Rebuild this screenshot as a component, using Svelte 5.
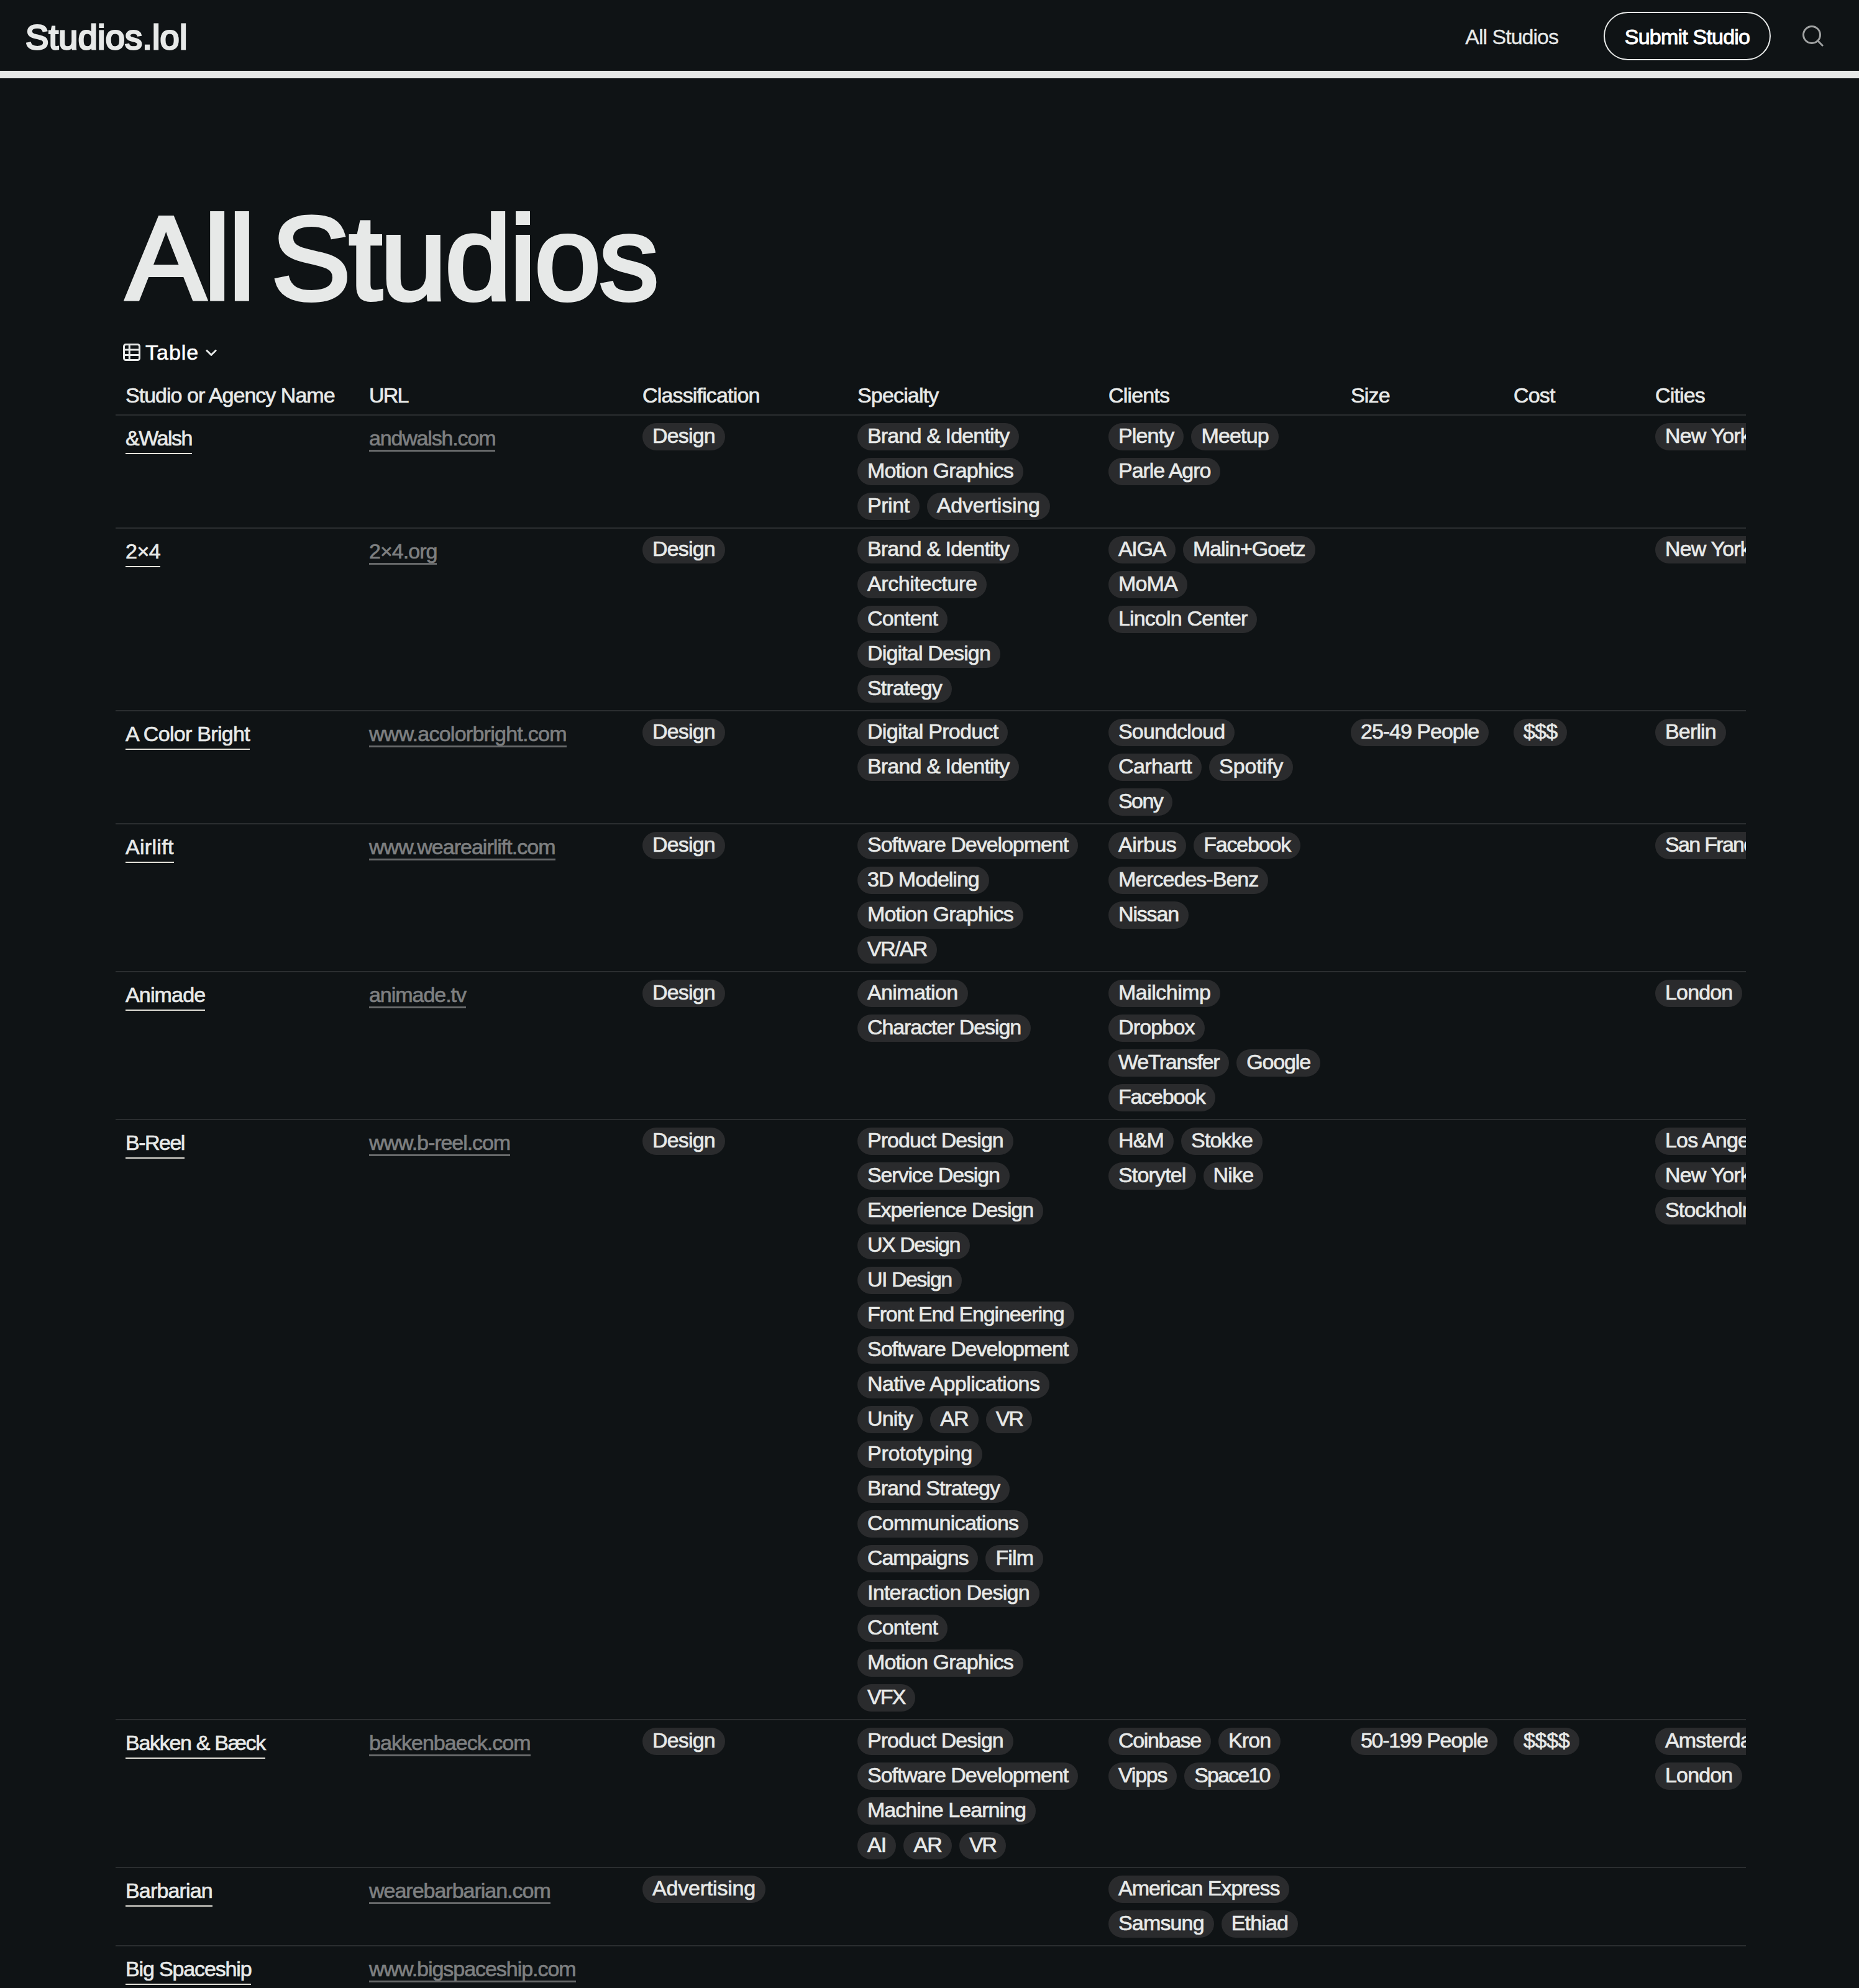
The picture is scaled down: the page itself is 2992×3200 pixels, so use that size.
<script lang="ts">
  type Row = {
    name: string;
    url: string;
    kind: string[][];
    specialty: string[][];
    clients: string[][];
    size: string[][];
    cost: string[][];
    cities: string[][];
  };

  // Lines are split by " / ", tags on one line by "|".
  const tags = (s: string): string[][] =>
    s ? s.split(' / ').map((line) => line.split('|')) : [];

  const row = (
    name: string, url: string, kind: string, specialty: string,
    clients: string, size: string, cost: string, cities: string
  ): Row => ({
    name, url, kind: tags(kind), specialty: tags(specialty), clients: tags(clients),
    size: tags(size), cost: tags(cost), cities: tags(cities)
  });

  const optical: Record<string, number> = {
    'Studio or Agency Name': -3, URL: -3,
    '&Walsh': -4, '2×4': 1, 'A Color Bright': 2, Airlift: 8, 'B-Reel': -4,
    'Bakken & Bæck': -6, 'Big Spaceship': -4,
    'andwalsh.com': -4, '2×4.org': -1, 'www.acolorbright.com': 2, 'www.weareairlift.com': -3,
    'animade.tv': -2, 'www.b-reel.com': -3, 'bakkenbaeck.com': -2,
    'wearebarbarian.com': -3, 'www.bigspaceship.com': -4,
    Advertising: 7, Architecture: 5, 'Digital Product': 2, 'Software Development': -4,
    '3D Modeling': -2, 'VR/AR': -4, Animation: 2, 'Character Design': -4,
    'Service Design': -4, 'Experience Design': -4, 'UX Design': -6, 'UI Design': -6,
    'Front End Engineering': -6, 'Native Applications': 6, VR: -3, Prototyping: 6,
    'Brand Strategy': -2, Campaigns: -2, 'Interaction Design': 2, VFX: -3,
    'Machine Learning': -2, Communications: 2, Print: 2, 'Product Design': -2,
    AIGA: -2, 'Malin+Goetz': -2, Spotify: 5, Sony: -3, Facebook: -3, 'Mercedes-Benz': -2,
    Nissan: -2, Mailchimp: 3, WeTransfer: -5, Google: -2, Coinbase: -4, Space10: -7,
    Vipps: -2, 'American Express': -3, 'Parle Agro': -2, Carhartt: 2, Airbus: 2,
    '25-49 People': -2, '50-199 People': -6, 'San Francisco': -11, '$$$$': 2
  };

  const tracking = (label: string): string =>
    `letter-spacing: ${(-0.84 + (optical[label] ?? 0) / label.length).toFixed(2)}px`;

  const columns = ['Studio or Agency Name', 'URL', 'Classification', 'Specialty', 'Clients', 'Size', 'Cost', 'Cities'];

  const rows: Row[] = [
    row('&Walsh', 'andwalsh.com', 'Design',
      'Brand & Identity / Motion Graphics / Print|Advertising',
      'Plenty|Meetup / Parle Agro', '', '', 'New York'),
    row('2×4', '2×4.org', 'Design',
      'Brand & Identity / Architecture / Content / Digital Design / Strategy',
      'AIGA|Malin+Goetz / MoMA / Lincoln Center', '', '', 'New York'),
    row('A Color Bright', 'www.acolorbright.com', 'Design',
      'Digital Product / Brand & Identity',
      'Soundcloud / Carhartt|Spotify / Sony', '25-49 People', '$$$', 'Berlin'),
    row('Airlift', 'www.weareairlift.com', 'Design',
      'Software Development / 3D Modeling / Motion Graphics / VR/AR',
      'Airbus|Facebook / Mercedes-Benz / Nissan', '', '', 'San Francisco'),
    row('Animade', 'animade.tv', 'Design',
      'Animation / Character Design',
      'Mailchimp / Dropbox / WeTransfer|Google / Facebook', '', '', 'London'),
    row('B-Reel', 'www.b-reel.com', 'Design',
      'Product Design / Service Design / Experience Design / UX Design / UI Design / Front End Engineering / Software Development / Native Applications / Unity|AR|VR / Prototyping / Brand Strategy / Communications / Campaigns|Film / Interaction Design / Content / Motion Graphics / VFX',
      'H&M|Stokke / Storytel|Nike', '', '', 'Los Angeles / New York / Stockholm'),
    row('Bakken & Bæck', 'bakkenbaeck.com', 'Design',
      'Product Design / Software Development / Machine Learning / AI|AR|VR',
      'Coinbase|Kron / Vipps|Space10', '50-199 People', '$$$$', 'Amsterdam / London'),
    row('Barbarian', 'wearebarbarian.com', 'Advertising', '',
      'American Express / Samsung|Ethiad', '', '', ''),
    row('Big Spaceship', 'www.bigspaceship.com', '', '', '', '', '', '')
  ];
</script>

{#snippet tagCell(lines: string[][])}
  <div class="cell tags">
    {#each lines as line}
      <div class="line">
        {#each line as tag}<span class="tag" style={tracking(tag)}>{tag}</span>{/each}
      </div>
    {/each}
  </div>
{/snippet}

<div class="page">
  <header>
    <a class="brand" href="#top">Studios.lol</a>
    <nav>
      <a class="link" href="#all">All Studios</a>
      <button class="submit">Submit Studio</button>
      <svg class="search" viewBox="0 0 34 34" aria-label="Search">
        <circle cx="15" cy="15" r="13.5" />
        <path d="M24.500 24.500 33 33" />
      </svg>
    </nav>
  </header>

  <main>
    <h1>All Studios</h1>

    <div class="view">
      <svg class="grid-icon" viewBox="0 0 28 28">
        <rect x="1.5" y="1.5" width="25" height="25" rx="3" />
        <path d="M1.500 10h25M1.500 18.500h25M10.300 1.500v25" />
      </svg>
      <span>Table</span>
      <svg class="chevron" viewBox="0 0 18 11"><path d="M1 1.500 9 9.300l8-7.800" /></svg>
    </div>

    <div class="table">
      <div class="row head">
        {#each columns as c}<div class="cell" style={tracking(c)}>{c}</div>{/each}
      </div>
      {#each rows as r}
        <div class="row">
          <div class="cell"><a class="name" href="#studio" style={tracking(r.name)}>{r.name}</a></div>
          <div class="cell"><a class="url" href="#url" style={tracking(r.url)}>{r.url}</a></div>
          {@render tagCell(r.kind)}
          {@render tagCell(r.specialty)}
          {@render tagCell(r.clients)}
          {@render tagCell(r.size)}
          {@render tagCell(r.cost)}
          {@render tagCell(r.cities)}
        </div>
      {/each}
    </div>
  </main>
</div>

<style>
  :global(body) {
    background: #0f1315;
  }
  .page {
    height: 3200px;
    overflow: hidden;
    background: #0f1315;
    color: #e7e9e8;
    font-family: 'Liberation Sans', Arial, sans-serif;
    font-size: 34px;
    line-height: 44px;
    letter-spacing: -0.84px;
  }
  a {
    color: inherit;
    text-decoration: none;
  }
  header {
    box-sizing: border-box;
    height: 126px;
    padding: 2px 57px 0 41px;
    border-bottom: 12px solid #e7e9e8;
    display: flex;
    align-items: center;
    justify-content: space-between;
  }
  .brand {
    padding-top: 3px;
    font-size: 56px;
    letter-spacing: 0.2px;
    -webkit-text-stroke: 2.8px currentColor;
  }
  nav {
    display: flex;
    align-items: center;
  }
  .link {
    padding-top: 2px;
    margin-right: 73px;
    letter-spacing: -1px;
    -webkit-text-stroke: 0.3px currentColor;
  }
  .submit {
    box-sizing: border-box;
    width: 269px;
    height: 78px;
    padding: 2px 0 0;
    margin-right: 51px;
    border: 2px solid #e7e9e8;
    border-radius: 39px;
    background: none;
    color: #fff;
    font: inherit;
    letter-spacing: -0.8px;
    -webkit-text-stroke: 1px #fff;
  }
  .search {
    width: 34px;
    height: 34px;
    fill: none;
    stroke: #a0a2a2;
    stroke-width: 3;
  }
  main {
    padding: 180px 182px 0 186px;
  }
  h1 {
    margin: 0;
    padding-left: 17px;
    font-weight: 400;
    font-size: 192px;
    line-height: 220px;
    letter-spacing: -2.8px;
    word-spacing: -22px;
    -webkit-text-stroke: 6px currentColor;
  }
  .view {
    display: flex;
    align-items: center;
    height: 44px;
    margin-top: 19px;
    padding-left: 12px;
    letter-spacing: 1px;
    color: #fff;
    -webkit-text-stroke: 0.6px #fff;
  }
  .view svg {
    fill: none;
    stroke: #e7e9e8;
    stroke-width: 3;
  }
  .grid-icon {
    width: 28px;
    height: 28px;
    margin-right: 8px;
  }
  .chevron {
    width: 18px;
    height: 11px;
    margin-left: 11px;
  }
  .table {
    overflow: hidden;
    -webkit-text-stroke: 0.7px currentColor;
  }
  .row {
    display: grid;
    grid-template-columns: 392px 440px 346px 404px 390px 262px 228px 400px;
    border-bottom: 2px solid #2b2e30;
  }
  .cell {
    box-sizing: border-box;
    padding: 12px 16px;
    white-space: nowrap;
    display: flex;
    align-items: flex-start;
  }
  .head {
    margin-top: 15px;
  }
  .head .cell {
    padding: 10px 16px 9px;
  }
  .tags {
    flex-direction: column;
    gap: 12px;
  }
  .line {
    display: flex;
    gap: 12px;
  }
  .tag {
    height: 44px;
    padding: 0 16px;
    border-radius: 22px;
    background: #2a2b2d;
    line-height: 41px;
  }
  .name {
    height: 48px;
    line-height: 48px;
    border-bottom: 2px solid #e4e2da;
  }
  .url {
    height: 43px;
    line-height: 48px;
    color: #7d7f80;
    border-bottom: 3px solid #67696a;
  }
</style>
